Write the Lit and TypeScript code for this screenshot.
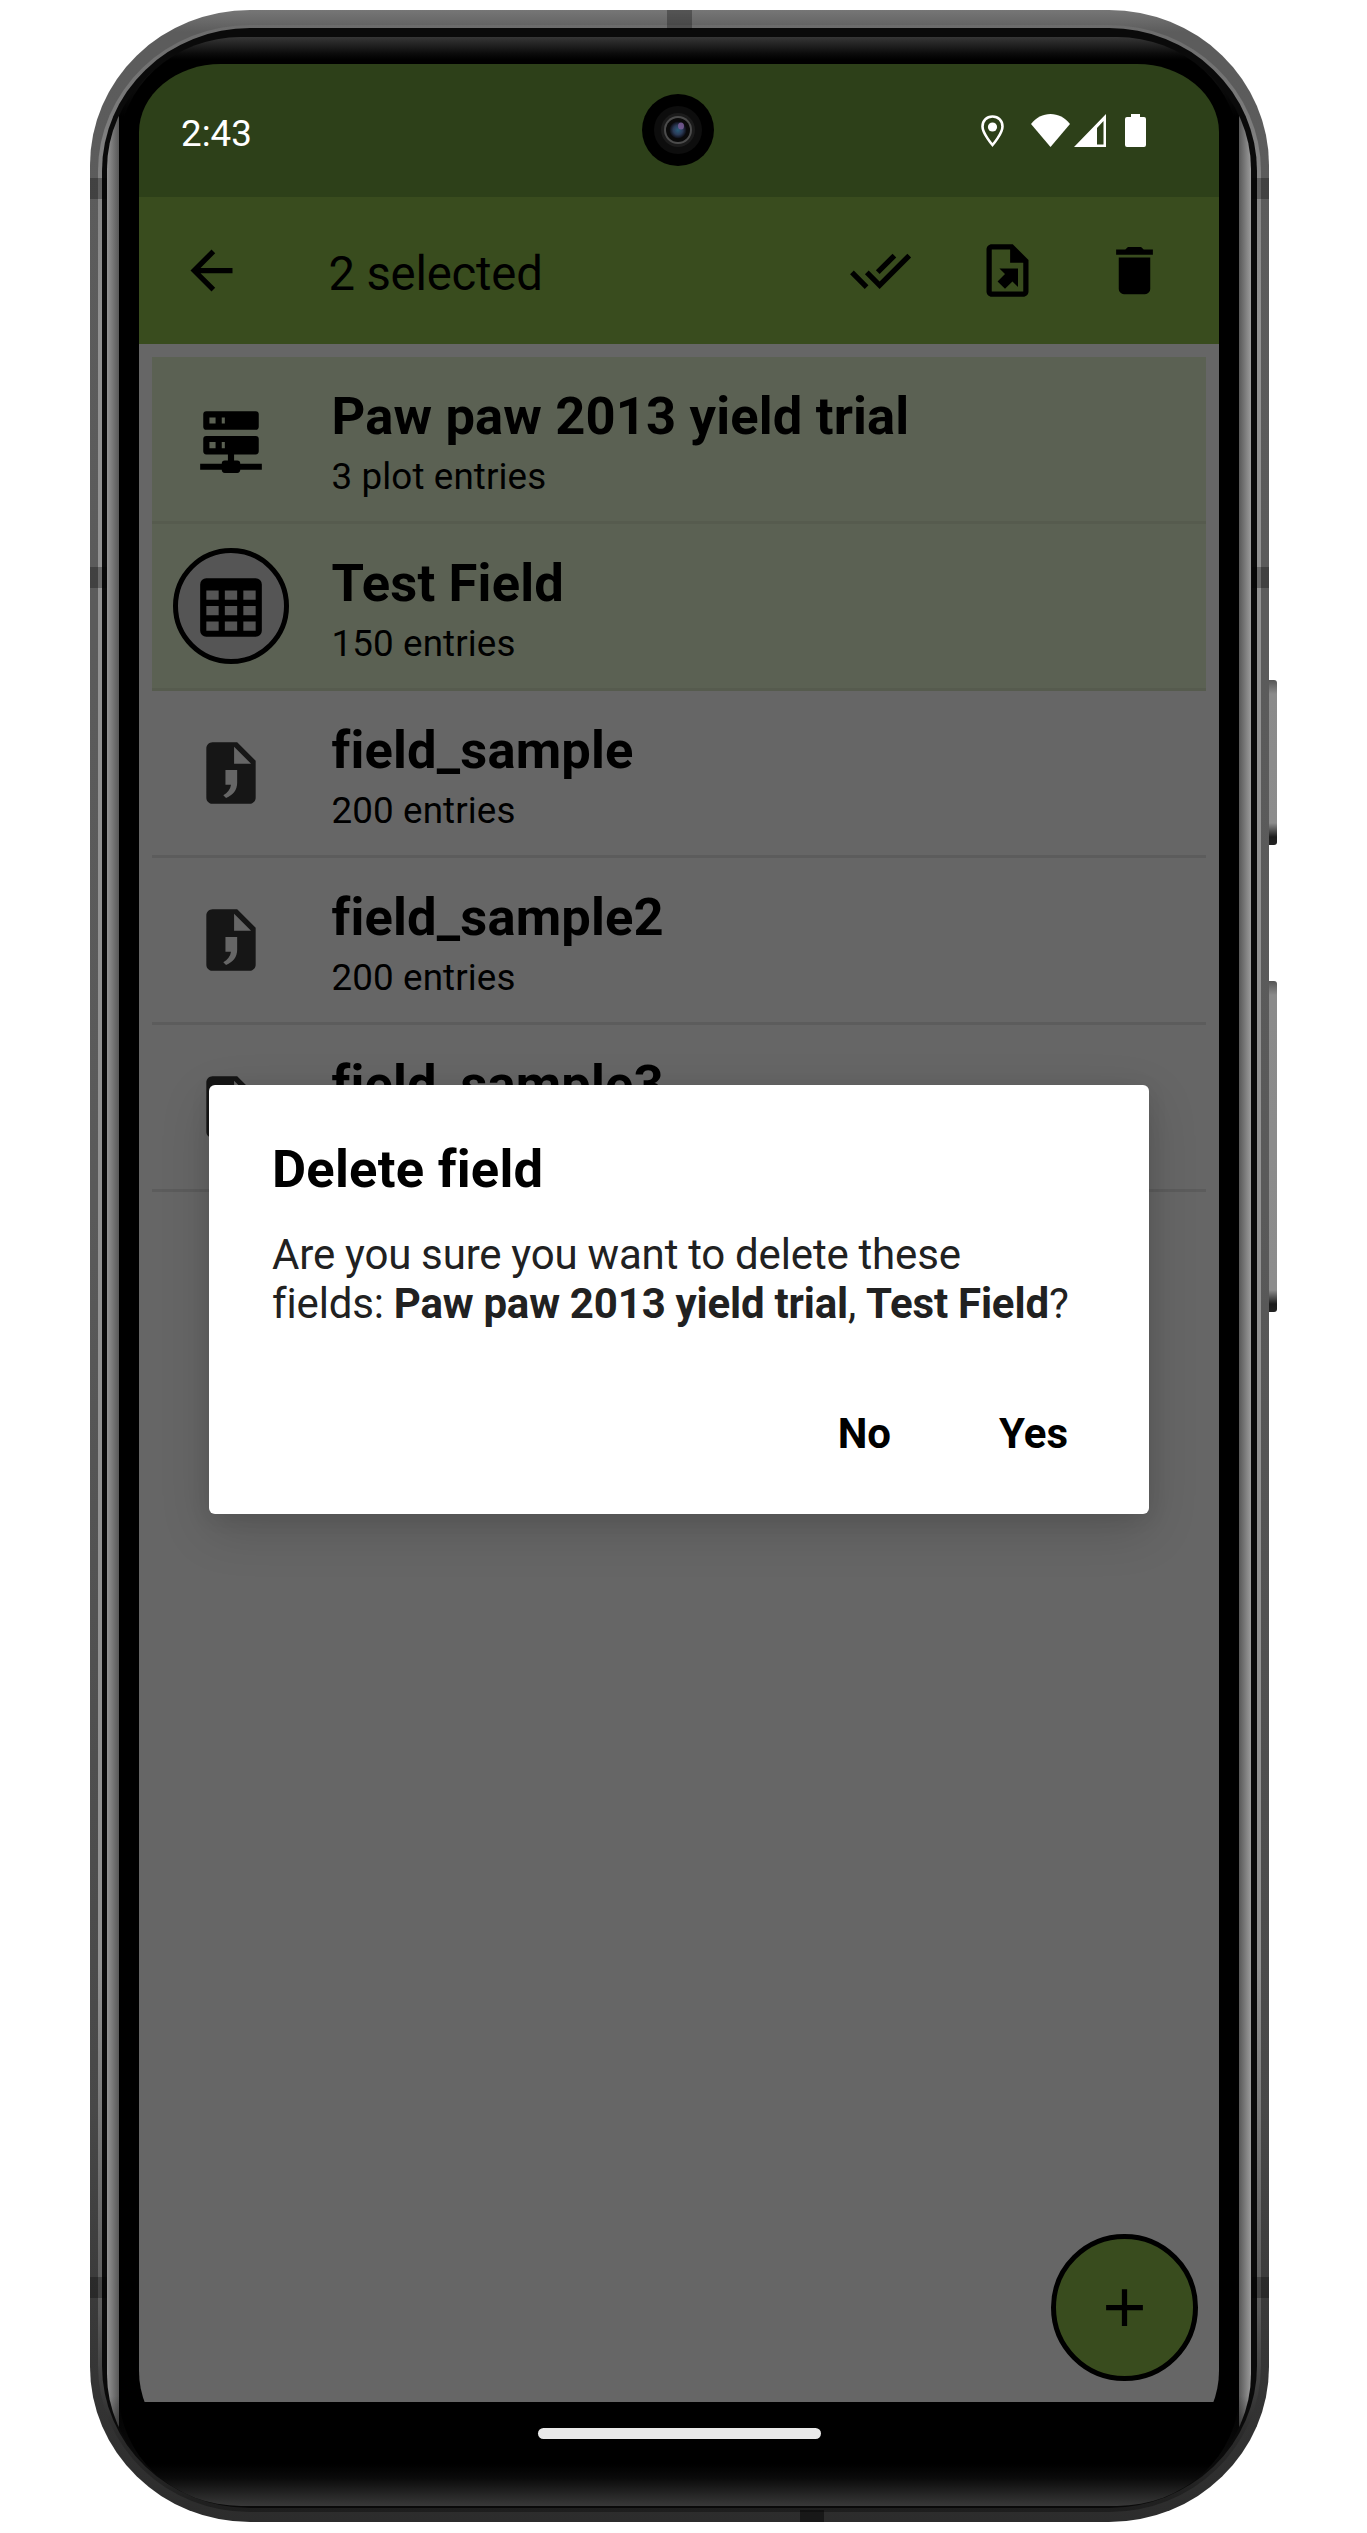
import { LitElement, html, css, svg } from "lit";
import { customElement } from "lit/decorators.js";

const icon = (d: string, size = 63, cls = "") =>
  html`<svg class="ic ${cls}" width=${size} height=${size} viewBox="0 0 24 24" aria-hidden="true">${svg`<path fill-rule="evenodd" d=${d}></path>`}</svg>`;

const P = {
  back: "M20 11H7.83l5.59-5.59L12 4l-8 8 8 8 1.41-1.41L7.83 13H20v-2z",
  checkAll: "M0.41,13.41L6,19L7.41,17.58L1.83,12M22.24,5.58L11.66,16.17L7.5,12L6.07,13.41L11.66,19L23.66,7M18,7L16.59,5.58L10.24,11.93L11.66,13.34L18,7Z",
  fileExport: "M14,2H6C4.89,2 4,2.89 4,4V20C4,21.11 4.89,22 6,22H18C19.11,22 20,21.11 20,20V8L14,2M18,20H6V4H13V9H18V20M8.93 11.2H16v7.07l-2.12-2.12-2.83 2.83-2.83-2.83 2.83-2.82z",
  del: "M19,4H15.5L14.5,3H9.5L8.5,4H5V6H19M6,19A2,2 0 0,0 8,21H16A2,2 0 0,0 18,19V7H6V19Z",
  server: "M13,19H14A1,1 0 0,1 15,20H22V22H15A1,1 0 0,1 14,23H10A1,1 0 0,1 9,22H2V20H9A1,1 0 0,1 10,19H11V17H4A1,1 0 0,1 3,16V12A1,1 0 0,1 4,11H20A1,1 0 0,1 21,12V16A1,1 0 0,1 20,17H13V19M4,3H20A1,1 0 0,1 21,4V8A1,1 0 0,1 20,9H4A1,1 0 0,1 3,8V4A1,1 0 0,1 4,3M9,7H10V5H9V7M9,15H10V13H9V15M5,5V7H7V5H5M5,13V15H7V13H5Z",
  table: "M4,3H20A2,2 0 0,1 22,5V20A2,2 0 0,1 20,22H4A2,2 0 0,1 2,20V5A2,2 0 0,1 4,3M4,7V10H8V7H4M10,7V10H14V7H10M20,10V7H16V10H20M4,12V15H8V12H4M4,20H8V17H4V20M10,12V15H14V12H10M10,20H14V17H10V20M20,20V17H16V20H20M20,12H16V15H20V12Z",
  file: "M14 2H6C4.9 2 4 2.9 4 4V20C4 21.1 4.9 22 6 22H18C19.1 22 20 21.1 20 20V8L14 2M13 9V3.5L18.5 9H13ZM10.2 11H14v4.2c0 2.3-1.3 4-3.6 4.9l-.9-.9c1.4-.8 2.3-1.9 2.5-3.4h-1.8z",
  plus: "M19,13H13V19H11V13H5V11H11V5H13V11H19V13Z",
};

interface Row { title: string; sub: string; d: string; selected?: boolean; circle?: boolean; soft?: boolean }
const rows: Row[] = [
  { title: "Paw paw 2013 yield trial", sub: "3 plot entries", d: P.server, selected: true },
  { title: "Test Field", sub: "150 entries", d: P.table, selected: true, circle: true },
  { title: "field_sample", sub: "200 entries", d: P.file, soft: true },
  { title: "field_sample2", sub: "200 entries", d: P.file, soft: true },
  { title: "field_sample3", sub: "200 entries", d: P.file, soft: true },
];

@customElement("app-root")
export class AppRoot extends LitElement {
  static styles = css`
    :host { display: block; width: 1367px; height: 2533px; background: #fff; box-sizing: border-box; padding: 10px 98px 11px 90px; font-family: Roboto, sans-serif; color: #000; overflow: hidden; }
    * { box-sizing: border-box; }
    .frame { position: relative; width: 1179px; height: 2512px; border-radius: 160px / 155px; padding: 15px 8px 10px 8px;
      background: linear-gradient(180deg, #767676 0, #5c5c5c 22px, #5a5a5a 1200px, #484848 2100px, #363636 2350px, #2c2c2c 100%); }
    .rim { height: 100%; border-radius: 152px / 146px; border: 4px solid transparent; border-top-width: 3px; padding: 9px 6px 2px 5px;
      background: linear-gradient(#0a0a0a, #0a0a0a) padding-box, linear-gradient(180deg, #6c6c6c 0, #808080 120px, #929292 300px, #929292 78%, #5a5a5a 92%, #2a2a2a 97%, #1e1e1e 100%) border-box; }
    .edge { height: 100%; border-radius: 140px / 132px; padding: 0 12px;
      background: linear-gradient(180deg, #141414 0, #141414 28px, transparent 80px, transparent calc(100% - 110px), #0d0d0d calc(100% - 35px)),
        linear-gradient(90deg, #949494 0, #585858 12px, #000 12px, #000 calc(100% - 12px), #585858 calc(100% - 12px), #9c9c9c 100%); }
    .bezel { height: 100%; border-radius: 122px / 112px; padding: 27px 20px 45px 20px;
      background: linear-gradient(180deg, #363636 0, #0a0a0a 17px, #000 23px, #000 calc(100% - 42px), #0a0a0a calc(100% - 28px), #383838 100%); }
    .screen { position: relative; height: 100%; width: 1080px; border-radius: 82px 82px 90px 90px / 68px 68px 90px 90px; overflow: hidden; background: #000; display: flex; flex-direction: column; }

    .band { position: absolute; background: rgba(0, 0, 0, .28); }
    .band.top { left: 577px; top: 0; width: 25px; height: 20px; }
    .band.bot { left: 710px; bottom: 0; width: 24px; height: 12px; background: rgba(0,0,0,.45); }
    .band.l1 { left: 0; top: 168px; width: 17px; height: 21px; }
    .band.l2 { left: 0; top: 557px; width: 17px; height: 21px; }
    .band.l3 { left: 0; top: 2267px; width: 17px; height: 21px; }
    .band.r1 { right: 0; top: 168px; width: 17px; height: 21px; }
    .band.r2 { right: 0; top: 557px; width: 17px; height: 21px; }
    .band.r3 { right: 0; top: 2267px; width: 17px; height: 21px; }
    .btn { position: absolute; left: 100%; width: 8px; border-radius: 0 3px 3px 0;
      background: linear-gradient(180deg, #555 0, #8a8a8a 14px, #8c8c8c calc(100% - 22px), #1c1c1c calc(100% - 8px), #222 100%); }
    .btn.a { top: 670px; height: 165px; }
    .btn.b { top: 971px; height: 331px; }

    .status { flex: none; height: 133px; background: #2d4019; display: flex; color: #fff; padding: 48px 73px 0 42px; position: relative; }
    .time { font-size: 36.75px; line-height: 43px; }
    .sys { margin-left: auto; display: flex; align-items: flex-start; margin-top: 2px; }
    .sys svg { display: block; fill: #fff; }
    .pin { margin-right: 27px; margin-top: 1px; }
    .wifi { margin-right: 4px; }
    .signal { margin-right: 19px; }
    .camera { position: absolute; left: 503px; top: 30px; width: 72px; height: 72px; }

    .toolbar { flex: none; height: 147px; background: #394c1e; display: flex; align-items: center; padding: 0 53px 0 41px; }
    .toolbar .ttl { flex: 1; margin-left: 85.5px; padding-top: 7px; font-size: 47.25px; line-height: 56px; letter-spacing: -0.2px; }
    .toolbar .acts { display: flex; gap: 64px; }
    .ic { display: block; flex: none; fill: currentColor; }

    .content { flex: none; height: 2058px; background: #666; position: relative; padding: 13px 13px 0; }
    .row { height: 167px; border-bottom: 3px solid #5c5c5c; display: flex; align-items: flex-start; }
    .row.sel { background: #5b6153; border-bottom-color: #565b4e; }
    .row .lead { flex: none; width: 116px; height: 116px; margin: 24px 42.5px 0 21px; display: flex; align-items: center; justify-content: center; }
    .row .lead.circle { border: 5px solid #000; border-radius: 50%; background: #555; }
    .row .lead.soft { color: #161616; }
    .row .txt { padding-top: 28px; }
    .row .t { font-size: 52.5px; line-height: 62px; font-weight: 700; white-space: nowrap; letter-spacing: 0.16px; }
    .row .s { font-size: 36.75px; line-height: 59px; white-space: nowrap; letter-spacing: 0.12px; }

    .dialog { position: absolute; left: 70px; top: 741px; width: 940px; height: 429px; background: #fff; border-radius: 6px; padding: 53px 81px 0 63px;
      box-shadow: 0 16px 50px rgba(0,0,0,.16), 0 4px 20px rgba(0,0,0,.08); }
    .dialog h2 { margin: 0; font-size: 52.5px; line-height: 62px; font-weight: 700; letter-spacing: 0.25px; }
    .dialog p { margin: 29.5px 0 0; font-size: 42px; line-height: 49.5px; color: #212121; white-space: nowrap; letter-spacing: -0.14px; word-spacing: -0.4px; }
    .dialog b { font-weight: 700; }
    .dialog .btns { margin-top: 80.5px; display: flex; justify-content: flex-end; gap: 108px; font-size: 42px; line-height: 50px; font-weight: 700; }

    .fab { position: absolute; left: 912px; top: 1890px; width: 147px; height: 147px; border-radius: 50%; border: 5px solid #000; background: #394c1e; display: flex; align-items: center; justify-content: center; }
    .nav { flex: none; height: 63px; background: #000; display: flex; justify-content: center; padding-top: 26px; }
    .pill { width: 283px; height: 11px; border-radius: 6px; background: #e9e9e9; }
  `;

  render() {
    return html`
      <div class="frame">
        <div class="rim"><div class="edge"><div class="bezel">
          <div class="screen">
            <div class="status">
              <span class="time">2:43</span>
              <svg class="camera" viewBox="0 0 72 72" aria-hidden="true">
                <defs>
                  <radialGradient id="lens" cx="50%" cy="50%" r="50%">
                    <stop offset="0" stop-color="#2a5f7a"></stop>
                    <stop offset=".55" stop-color="#2b3b58"></stop>
                    <stop offset="1" stop-color="#0c0c12"></stop>
                  </radialGradient>
                </defs>
                <circle cx="36" cy="36" r="36" fill="#000"></circle>
                <circle cx="36" cy="36" r="24" fill="#0d0d0d"></circle>
                <circle cx="36" cy="36" r="17" fill="#1b1b1b"></circle>
                <circle cx="36" cy="36" r="14" fill="#4b4b4b"></circle>
                <circle cx="36" cy="36" r="12" fill="#0a0a0a"></circle>
                <circle cx="36" cy="36" r="8.5" fill="url(#lens)"></circle>
                <ellipse cx="39" cy="32" rx="3" ry="3.6" fill="#7a5d96" opacity=".85"></ellipse>
              </svg>
              <div class="sys">
                <svg class="pin" width="23" height="32" viewBox="0 0 23 32" aria-hidden="true">
                  <path d="M11.5 1.5C5.5 1.5 1.5 6 1.5 11.5c0 7 10 18.5 10 18.5s10-11.500 10-18.500c0-5.500-4-10-10-10z" fill="none" stroke="#fff" stroke-width="2.600"></path>
                  <circle cx="11.500" cy="12" r="4.600"></circle>
                </svg>
                <svg class="wifi" width="39" height="33" viewBox="0 0 39 33" aria-hidden="true"><path d="M19.500 33L0 10C5 3.500 12 0 19.500 0S34 3.500 39 10z"></path></svg>
                <svg class="signal" width="32" height="33" viewBox="0 0 32 33" aria-hidden="true"><path fill-rule="evenodd" d="M0 33L32 0V33zM23 14L29.500 7V30.500H23z"></path></svg>
                <svg class="batt" width="21" height="33" viewBox="0 0 21 33" aria-hidden="true"><path d="M6 0h9v3h4a2 2 0 0 1 2 2v26a2 2 0 0 1-2 2H2a2 2 0 0 1-2-2V5a2 2 0 0 1 2-2h4z"></path></svg>
              </div>
            </div>

            <div class="toolbar">
              ${icon(P.back)}
              <div class="ttl">2 selected</div>
              <div class="acts">${icon(P.checkAll)}${icon(P.fileExport)}${icon(P.del)}</div>
            </div>

            <div class="content">
              ${rows.map(
                (r) => html`
                  <div class="row ${r.selected ? "sel" : ""}">
                    <div class="lead ${r.circle ? "circle" : ""} ${r.soft ? "soft" : ""}">${icon(r.d, 74)}</div>
                    <div class="txt">
                      <div class="t">${r.title}</div>
                      <div class="s">${r.sub}</div>
                    </div>
                  </div>
                `
              )}
              <div class="dialog">
                <h2>Delete field</h2>
                <p>Are you sure you want to delete these<br />fields: <b>Paw paw 2013 yield trial</b>, <b>Test Field</b>?</p>
                <div class="btns"><span>No</span><span>Yes</span></div>
              </div>
              <div class="fab">${icon(P.plus)}</div>
            </div>

            <div class="nav"><div class="pill"></div></div>
          </div>
        </div></div></div>
        <i class="band top"></i><i class="band bot"></i>
        <i class="band l1"></i><i class="band l2"></i><i class="band l3"></i>
        <i class="band r1"></i><i class="band r2"></i><i class="band r3"></i>
        <i class="btn a"></i><i class="btn b"></i>
      </div>
    `;
  }
}
